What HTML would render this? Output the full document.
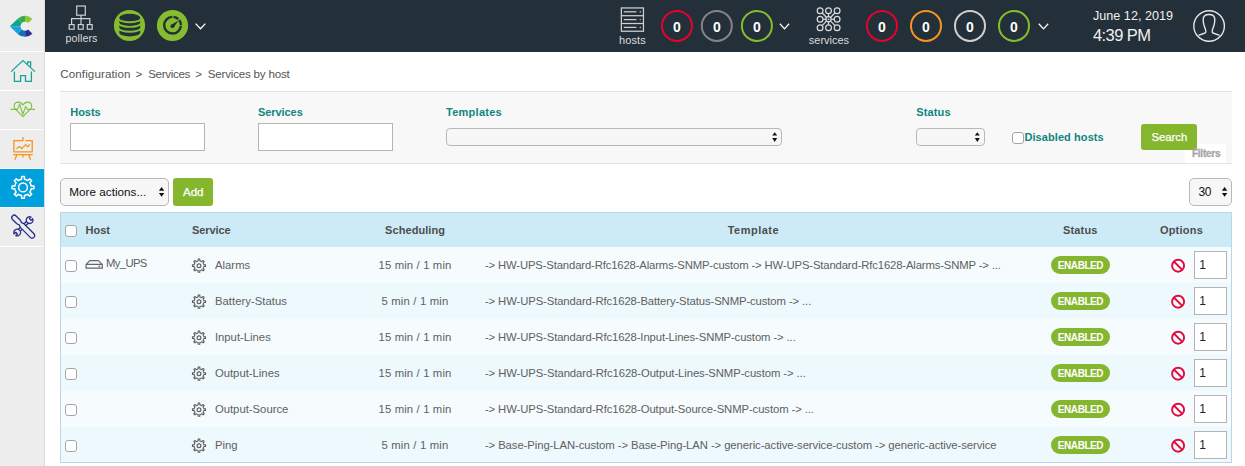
<!DOCTYPE html>
<html><head><meta charset="utf-8">
<style>
*{box-sizing:border-box;margin:0;padding:0}
html,body{width:1245px;height:466px;overflow:hidden;background:#fff;font-family:"Liberation Sans",sans-serif}
.a{position:absolute}
.t{position:absolute;white-space:nowrap;line-height:1}
.sep{position:absolute;left:0;width:44px;height:1px;background:#fff}
.inp{position:absolute;background:#fff;border:1px solid #b5b5b8}
.sel{position:absolute;background:#f7f7f7;border:1px solid #b8b8b8;border-radius:4px}
.row{position:absolute;left:61px;width:1170px;height:36px}
.cb{position:absolute;width:12px;height:12px;border:1px solid #a6a6a6;border-radius:3px;background:#fff}
.badge{position:absolute;width:59px;height:18px;border-radius:9px;background:#84b62e}
.num{position:absolute;width:33px;height:28px;background:#fff;border:1px solid #b3b3b3}
svg{position:absolute;left:0;top:0}
</style></head><body>
<div class="a" style="left:0;top:0;width:45px;height:466px;background:#ededed;border-right:1px solid #dcdcdc"></div>
<div class="sep" style="top:51px"></div>
<div class="sep" style="top:90px"></div>
<div class="sep" style="top:129px"></div>
<div class="sep" style="top:168px"></div>
<div class="sep" style="top:207px"></div>
<div class="sep" style="top:246px"></div>
<div class="a" style="left:0;top:169px;width:44px;height:38px;background:#00a0dd"></div>
<div class="a" style="left:45px;top:0;width:1200px;height:52px;background:#232f39"></div>
<div class="t" style="left:60.20px;top:68.18px;font-size:11.6px;color:#555;letter-spacing:0.115px;">Configuration</div>
<div class="t" style="left:135.60px;top:68.18px;font-size:11.6px;color:#555;">&gt;</div>
<div class="t" style="left:148.20px;top:68.18px;font-size:11.6px;color:#555;letter-spacing:-0.335px;">Services</div>
<div class="t" style="left:195.20px;top:68.18px;font-size:11.6px;color:#555;">&gt;</div>
<div class="t" style="left:207.70px;top:68.18px;font-size:11.6px;color:#555;letter-spacing:-0.194px;">Services by host</div>
<div class="a" style="left:60px;top:91px;width:1172px;height:73px;background:#f8f8f8;border-top:1px solid #e3e3e3;border-bottom:1px solid #e3e3e3"></div>
<div class="t" style="left:70.30px;top:106.79px;font-size:11px;color:#10857f;font-weight:bold;letter-spacing:-0.053px;">Hosts</div>
<div class="inp" style="left:70px;top:123px;width:135px;height:28px"></div>
<div class="t" style="left:258.00px;top:106.79px;font-size:11px;color:#10857f;font-weight:bold;letter-spacing:-0.070px;">Services</div>
<div class="inp" style="left:258px;top:123px;width:135px;height:28px"></div>
<div class="t" style="left:446.00px;top:106.79px;font-size:11px;color:#10857f;font-weight:bold;letter-spacing:0.267px;">Templates</div>
<div class="sel" style="left:446px;top:128px;width:336px;height:18px"></div>
<div class="t" style="left:916.20px;top:106.59px;font-size:11px;color:#10857f;font-weight:bold;letter-spacing:0.147px;">Status</div>
<div class="sel" style="left:916px;top:128px;width:69px;height:18px"></div>
<div class="cb" style="left:1012px;top:132px"></div>
<div class="t" style="left:1024.40px;top:131.59px;font-size:11px;color:#10857f;font-weight:bold;letter-spacing:0.083px;">Disabled hosts</div>
<div class="a" style="left:1185px;top:144px;width:41px;height:19px;background:#fff"></div>
<div class="a" style="left:1141px;top:124px;width:56px;height:26px;background:#84b62e;border-radius:3px"></div>
<div class="t" style="left:1151.50px;top:131.55px;font-size:11.4px;color:#fff;letter-spacing:-0.070px;-webkit-text-stroke:0.25px #fff;">Search</div>
<div class="t" style="left:1192.00px;top:149.13px;font-size:10px;color:#a6a6a6;font-weight:bold;letter-spacing:-0.259px;-webkit-text-stroke:0.3px #a6a6a6;">Filters</div>
<div class="sel" style="left:60px;top:178px;width:109px;height:28px;border-radius:5px"></div>
<div class="t" style="left:69.30px;top:186.10px;font-size:11.7px;color:#111;letter-spacing:0.018px;">More actions...</div>
<div class="a" style="left:173px;top:178px;width:40px;height:28px;background:#84b62e;border-radius:3px"></div>
<div class="t" style="left:183.10px;top:186.18px;font-size:11.6px;color:#fff;letter-spacing:-0.114px;-webkit-text-stroke:0.25px #fff;">Add</div>
<div class="sel" style="left:1189px;top:178px;width:43px;height:28px;border-radius:5px"></div>
<div class="t" style="left:1198.60px;top:185.84px;font-size:12px;color:#111;letter-spacing:-0.424px;">30</div>
<div class="a" style="left:60px;top:212px;width:1172px;height:251px;border:1px solid #bcd6e5;background:#f6fcfe"></div>
<div class="a" style="left:61px;top:213px;width:1170px;height:34px;background:#cdebf7"></div>
<div class="row" style="top:283px;height:36px;background:#eef9fd"></div>
<div class="row" style="top:355px;height:36px;background:#eef9fd"></div>
<div class="row" style="top:427px;height:35px;background:#eef9fd"></div>
<div class="cb" style="left:65px;top:225px"></div>
<div class="t" style="left:85.60px;top:224.59px;font-size:11px;color:#4d4d4d;font-weight:bold;letter-spacing:-0.011px;">Host</div>
<div class="t" style="left:191.90px;top:224.79px;font-size:11px;color:#4d4d4d;font-weight:bold;letter-spacing:-0.049px;">Service</div>
<div class="t" style="left:385.10px;top:224.69px;font-size:11px;color:#4d4d4d;font-weight:bold;letter-spacing:0.062px;">Scheduling</div>
<div class="t" style="left:727.70px;top:224.59px;font-size:11px;color:#4d4d4d;font-weight:bold;letter-spacing:0.490px;">Template</div>
<div class="t" style="left:1063.00px;top:224.79px;font-size:11px;color:#4d4d4d;font-weight:bold;letter-spacing:0.163px;">Status</div>
<div class="t" style="left:1159.90px;top:224.99px;font-size:11px;color:#4d4d4d;font-weight:bold;letter-spacing:0.221px;">Options</div>
<div class="cb" style="left:65px;top:260px"></div>
<div class="t" style="left:106.00px;top:258.33px;font-size:11.3px;color:#606060;letter-spacing:-0.647px;">My_UPS</div>
<div class="t" style="left:214.90px;top:259.93px;font-size:11.3px;color:#606060;letter-spacing:0.040px;">Alarms</div>
<div class="t" style="left:378.50px;top:259.93px;font-size:11.3px;color:#606060;letter-spacing:0.145px;">15 min / 1 min</div>
<div class="t" style="left:484.90px;top:259.93px;font-size:11.3px;color:#606060;letter-spacing:-0.143px;">-&gt; HW-UPS-Standard-Rfc1628-Alarms-SNMP-custom -&gt; HW-UPS-Standard-Rfc1628-Alarms-SNMP -&gt; ...</div>
<div class="badge" style="left:1051px;top:256px"></div>
<div class="t" style="left:1057.85px;top:261.44px;font-size:10px;color:#fff;font-weight:bold;letter-spacing:-0.434px;">ENABLED</div>
<div class="num" style="left:1194px;top:251px"></div>
<div class="t" style="left:1199.30px;top:258.84px;font-size:12px;color:#222;">1</div>
<div class="cb" style="left:65px;top:296px"></div>
<div class="t" style="left:214.90px;top:295.93px;font-size:11.3px;color:#606060;letter-spacing:0.036px;">Battery-Status</div>
<div class="t" style="left:381.45px;top:295.93px;font-size:11.3px;color:#606060;letter-spacing:0.186px;">5 min / 1 min</div>
<div class="t" style="left:484.90px;top:295.93px;font-size:11.3px;color:#606060;letter-spacing:-0.104px;">-&gt; HW-UPS-Standard-Rfc1628-Battery-Status-SNMP-custom -&gt; ...</div>
<div class="badge" style="left:1051px;top:292px"></div>
<div class="t" style="left:1057.85px;top:297.44px;font-size:10px;color:#fff;font-weight:bold;letter-spacing:-0.434px;">ENABLED</div>
<div class="num" style="left:1194px;top:287px"></div>
<div class="t" style="left:1199.30px;top:294.84px;font-size:12px;color:#222;">1</div>
<div class="cb" style="left:65px;top:332px"></div>
<div class="t" style="left:214.90px;top:331.93px;font-size:11.3px;color:#606060;">Input-Lines</div>
<div class="t" style="left:378.50px;top:331.93px;font-size:11.3px;color:#606060;letter-spacing:0.145px;">15 min / 1 min</div>
<div class="t" style="left:484.90px;top:331.93px;font-size:11.3px;color:#606060;letter-spacing:-0.106px;">-&gt; HW-UPS-Standard-Rfc1628-Input-Lines-SNMP-custom -&gt; ...</div>
<div class="badge" style="left:1051px;top:328px"></div>
<div class="t" style="left:1057.85px;top:333.44px;font-size:10px;color:#fff;font-weight:bold;letter-spacing:-0.434px;">ENABLED</div>
<div class="num" style="left:1194px;top:323px"></div>
<div class="t" style="left:1199.30px;top:330.84px;font-size:12px;color:#222;">1</div>
<div class="cb" style="left:65px;top:368px"></div>
<div class="t" style="left:214.90px;top:367.93px;font-size:11.3px;color:#606060;">Output-Lines</div>
<div class="t" style="left:378.50px;top:367.93px;font-size:11.3px;color:#606060;letter-spacing:0.145px;">15 min / 1 min</div>
<div class="t" style="left:484.90px;top:367.93px;font-size:11.3px;color:#606060;letter-spacing:-0.083px;">-&gt; HW-UPS-Standard-Rfc1628-Output-Lines-SNMP-custom -&gt; ...</div>
<div class="badge" style="left:1051px;top:364px"></div>
<div class="t" style="left:1057.85px;top:369.44px;font-size:10px;color:#fff;font-weight:bold;letter-spacing:-0.434px;">ENABLED</div>
<div class="num" style="left:1194px;top:359px"></div>
<div class="t" style="left:1199.30px;top:366.84px;font-size:12px;color:#222;">1</div>
<div class="cb" style="left:65px;top:404px"></div>
<div class="t" style="left:214.90px;top:403.93px;font-size:11.3px;color:#606060;">Output-Source</div>
<div class="t" style="left:378.50px;top:403.93px;font-size:11.3px;color:#606060;letter-spacing:0.145px;">15 min / 1 min</div>
<div class="t" style="left:484.90px;top:403.93px;font-size:11.3px;color:#606060;letter-spacing:-0.092px;">-&gt; HW-UPS-Standard-Rfc1628-Output-Source-SNMP-custom -&gt; ...</div>
<div class="badge" style="left:1051px;top:400px"></div>
<div class="t" style="left:1057.85px;top:405.44px;font-size:10px;color:#fff;font-weight:bold;letter-spacing:-0.434px;">ENABLED</div>
<div class="num" style="left:1194px;top:395px"></div>
<div class="t" style="left:1199.30px;top:402.84px;font-size:12px;color:#222;">1</div>
<div class="cb" style="left:65px;top:440px"></div>
<div class="t" style="left:214.90px;top:439.93px;font-size:11.3px;color:#606060;">Ping</div>
<div class="t" style="left:381.45px;top:439.93px;font-size:11.3px;color:#606060;letter-spacing:0.186px;">5 min / 1 min</div>
<div class="t" style="left:484.90px;top:439.93px;font-size:11.3px;color:#606060;letter-spacing:-0.077px;">-&gt; Base-Ping-LAN-custom -&gt; Base-Ping-LAN -&gt; generic-active-service-custom -&gt; generic-active-service</div>
<div class="badge" style="left:1051px;top:436px"></div>
<div class="t" style="left:1057.85px;top:441.44px;font-size:10px;color:#fff;font-weight:bold;letter-spacing:-0.434px;">ENABLED</div>
<div class="num" style="left:1194px;top:431px"></div>
<div class="t" style="left:1199.30px;top:438.84px;font-size:12px;color:#222;">1</div>
<svg width="1245" height="466" viewBox="0 0 1245 466" style="position:absolute;left:0;top:0"><defs><clipPath id="lc"><path d="M32.42,18.88 A10.5,10.5 0 0 0 17.74,18.71 L9.8,26.3 L17.74,33.89 A10.5,10.5 0 0 0 32.42,33.72 L28.18,29.48 A4.5,4.5 0 1 1 28.18,23.12 Z"/></clipPath></defs><g clip-path="url(#lc)"><polygon fill="#8cc63f" points="25.0,26.3 45,26.3 45,0 25.0,0"/><polygon fill="#3aaa48" points="25.0,26.3 25.0,0 4.27,4.61"/><polygon fill="#12a38c" points="25.0,26.3 4.27,4.61 0,4.61 0,26.3"/><polygon fill="#18a3dd" points="25.0,26.3 0,26.3 0,48 4.27,47.99"/><polygon fill="#1272b8" points="25.0,26.3 4.27,47.99 25.6,56"/><polygon fill="#2e3192" points="25.0,26.3 25.6,56 45,56 45,26.3"/></g><g fill="none" stroke="#17a498" stroke-width="1.3" stroke-linecap="square"><polyline points="11.6,71.2 22.9,60.6 34.5,71.2"/><polyline points="27.6,63.6 27.6,61.9 30.6,61.9 30.6,66.3"/><polyline points="14.4,72.2 14.4,81.4 20.6,81.4 20.6,75.6 25.5,75.6 25.5,81.4 31.4,81.4 31.4,72.2"/></g><g fill="none" stroke="#80c244" stroke-width="1.15" stroke-linejoin="round"><path d="M22.9,116.6 L15.4,109.2 C12.8,106.2 14.2,102.2 18,102.1 C20.3,102.1 22,103.6 22.9,105 C23.8,103.6 25.5,102.1 27.8,102.1 C31.6,102.2 33,106.2 30.4,109.2 Z"/><polyline points="10.6,109.4 17.5,109.4 19.6,104.3 22.9,114.2 25.7,106.4 27.3,109.4 35,109.4"/></g><g fill="none" stroke="#f7941d" stroke-width="1.3"><path d="M22.9,137 V140.6 H13.9 V151.9 H32.2 V140.6 H25.3"/><line x1="13.3" y1="154.7" x2="32.8" y2="154.7"/><line x1="16.8" y1="155" x2="15" y2="159.8"/><line x1="22.9" y1="155" x2="22.9" y2="157.6"/><line x1="28.8" y1="155" x2="30.6" y2="159.8"/><polyline stroke-linejoin="round" points="16.5,148.8 19.5,146.6 21.8,148.6 25.7,144.6 27.8,146.8 29.8,144.4"/></g><path fill="none" stroke="#fff" stroke-width="1.5" stroke-linejoin="round" d="M19.82,179.73 L21.54,179.23 L21.62,176.49 L24.38,176.49 L24.46,179.23 L26.18,179.73 L27.75,180.59 L29.74,178.71 L31.69,180.66 L29.81,182.65 L30.67,184.22 L31.17,185.94 L33.91,186.02 L33.91,188.78 L31.17,188.86 L30.67,190.58 L29.81,192.15 L31.69,194.14 L29.74,196.09 L27.75,194.21 L26.18,195.07 L24.46,195.57 L24.38,198.31 L21.62,198.31 L21.54,195.57 L19.82,195.07 L18.25,194.21 L16.26,196.09 L14.31,194.14 L16.19,192.15 L15.33,190.58 L14.83,188.86 L12.09,188.78 L12.09,186.02 L14.83,185.94 L15.33,184.22 L16.19,182.65 L14.31,180.66 L16.26,178.71 L18.25,180.59 Z"/><circle cx="23" cy="187.4" r="4.4" fill="none" stroke="#fff" stroke-width="1.5"/><g fill="#ededed" stroke="#262e8a" stroke-width="1.3" stroke-linejoin="round"><g transform="translate(23.4,226.3) rotate(-45)"><path d="M-6.5,-1.3 L6.5,-1.3 L6.5,1.3 L-6.5,1.3 Z"/><path d="M11.98,-1.2 A3.4,3.4 0 1 0 11.98,1.2 L9.6,1.2 L9.6,-1.2 Z"/><path d="M-11.98,-1.2 A3.4,3.4 0 1 1 -11.98,1.2 L-9.6,1.2 L-9.6,-1.2 Z"/></g><g transform="translate(23.2,226.6) rotate(45)"><path d="M-12.6,-2.5 A2.5,2.5 0 0 0 -12.6,2.5 L-6.5,2.5 L-4,1.6 L-1.5,2.6 L12.6,2.6 A2.6,2.6 0 0 0 12.6,-2.6 L-1.5,-2.6 L-4,-1.6 L-6.5,-2.5 Z"/></g></g><g fill="none" stroke="#cfcfcf" stroke-width="1.2"><rect x="76.7" y="6" width="8.6" height="9.2"/><line x1="81" y1="15.2" x2="81" y2="24.5"/><polyline points="71.6,24.5 71.6,18.6 89.8,18.6 89.8,24.5"/><rect x="69.2" y="24.6" width="4.9" height="4.6"/><rect x="78.3" y="24.6" width="4.9" height="4.6"/><rect x="87.3" y="24.6" width="4.9" height="4.6"/></g><circle cx="129.5" cy="25.5" r="15.6" fill="#86bc2f"/><path fill="#232f39" d="M119.3,17.65 A10.45,3.85 0 0 1 140.2,17.65 L140.2,32.65 A10.45,3.85 0 0 1 119.3,32.65 Z"/><path fill="none" stroke="#86bc2f" stroke-width="1.9" d="M118.6,18.4 A11.1,3.85 0 0 0 140.9,18.4"/><path fill="none" stroke="#86bc2f" stroke-width="1.9" d="M118.6,23.0 A11.1,3.85 0 0 0 140.9,23.0"/><path fill="none" stroke="#86bc2f" stroke-width="1.9" d="M118.6,27.9 A11.1,3.85 0 0 0 140.9,27.9"/><circle cx="172.5" cy="25.5" r="15.6" fill="#86bc2f"/><circle cx="172.55" cy="25.2" r="8.35" fill="none" stroke="#232f39" stroke-width="2.4" stroke-dasharray="38.3 1.2 5.35 1.2 5.35 1.2" stroke-dashoffset="-0.6"/><polygon fill="#232f39" points="171.0,24.9 173.7,27.5 178.4,20.6"/><circle cx="172.35" cy="26.2" r="1.85" fill="#232f39"/><g fill="none" stroke="#fff" stroke-width="1.3"><polyline points="195.6,23.6 200.5,28.7 205.4,23.6"/><polyline points="779.9,23.8 784.5,28.9 789.1,23.8"/><polyline points="1038.8,23.8 1043.5,28.9 1048.2,23.8"/></g><g fill="none" stroke="#cfcfcf" stroke-width="1.25"><rect x="621.35" y="7.95" width="22.1" height="23.3"/><line x1="621.35" y1="15.7" x2="643.45" y2="15.7"/><line x1="621.35" y1="23.5" x2="643.45" y2="23.5"/><line x1="623.8" y1="11.8" x2="636.4" y2="11.8"/><line x1="623.8" y1="19.6" x2="636.4" y2="19.6"/><line x1="623.8" y1="27.4" x2="636.4" y2="27.4"/></g><g fill="#cfcfcf"><circle cx="640.3" cy="11.8" r="0.7"/><circle cx="640.3" cy="19.6" r="0.7"/><circle cx="640.3" cy="27.4" r="0.7"/></g><g fill="none" stroke="#dcdcdc" stroke-width="1.2"><circle cx="820.1" cy="10.7" r="2.9"/><line x1="826.68" y1="17.73" x2="822.13" y2="12.77"/><circle cx="820.1" cy="19.3" r="2.9"/><line x1="825.90" y1="19.30" x2="823.00" y2="19.30"/><circle cx="820.1" cy="27.7" r="2.9"/><line x1="826.66" y1="20.86" x2="822.15" y2="25.65"/><circle cx="828.5" cy="10.7" r="2.9"/><line x1="828.50" y1="17.10" x2="828.50" y2="13.60"/><circle cx="828.5" cy="27.7" r="2.9"/><line x1="828.50" y1="21.50" x2="828.50" y2="24.80"/><circle cx="837.1" cy="10.7" r="2.9"/><line x1="830.34" y1="17.74" x2="835.05" y2="12.75"/><circle cx="837.1" cy="19.3" r="2.9"/><line x1="831.10" y1="19.30" x2="834.20" y2="19.30"/><circle cx="837.1" cy="27.7" r="2.9"/><line x1="830.36" y1="20.84" x2="835.03" y2="25.67"/><circle cx="828.5" cy="19.3" r="2.6"/></g><circle cx="828.5" cy="19.3" r="0.9" fill="#dcdcdc"/><circle cx="677" cy="25.9" r="15" fill="none" stroke="#e4032e" stroke-width="2"/><circle cx="716.8" cy="25.9" r="15" fill="none" stroke="#848487" stroke-width="2"/><circle cx="756.9" cy="25.9" r="15" fill="none" stroke="#84bd2d" stroke-width="2"/><circle cx="882" cy="25.9" r="15" fill="none" stroke="#e4032e" stroke-width="2"/><circle cx="926" cy="25.9" r="15" fill="none" stroke="#f7931e" stroke-width="2"/><circle cx="970" cy="25.9" r="15" fill="none" stroke="#cfcfcf" stroke-width="2"/><circle cx="1014" cy="25.9" r="15" fill="none" stroke="#84bd2d" stroke-width="2"/><g fill="none" stroke="#e6e6e6" stroke-width="1.4"><circle cx="1209.1" cy="26" r="15.3"/><path d="M1198.4,35.4 L1205,33 Q1206.2,32.4 1205.8,30.6 L1203.8,24.5 Q1203.2,22 1203.2,19.5 Q1203.2,14.5 1209,14.5 Q1214.8,14.5 1214.8,19.5 Q1214.8,22 1214.2,24.5 L1212.2,30.6 Q1211.8,32.4 1213,33 L1219.6,35.4"/></g><path fill="none" stroke="#606060" stroke-width="1.1" stroke-linejoin="round" d="M197.12,261.17 L198.14,260.88 L198.17,259.15 L199.83,259.15 L199.86,260.88 L200.88,261.17 L201.80,261.68 L203.05,260.48 L204.22,261.65 L203.02,262.90 L203.53,263.82 L203.82,264.84 L205.55,264.87 L205.55,266.53 L203.82,266.56 L203.53,267.58 L203.02,268.50 L204.22,269.75 L203.05,270.92 L201.80,269.72 L200.88,270.23 L199.86,270.52 L199.83,272.25 L198.17,272.25 L198.14,270.52 L197.12,270.23 L196.20,269.72 L194.95,270.92 L193.78,269.75 L194.98,268.50 L194.47,267.58 L194.18,266.56 L192.45,266.53 L192.45,264.87 L194.18,264.84 L194.47,263.82 L194.98,262.90 L193.78,261.65 L194.95,260.48 L196.20,261.68 Z"/><circle cx="199" cy="265.7" r="1.9" fill="none" stroke="#606060" stroke-width="1.2"/><circle cx="1178.1" cy="265.7" r="6" fill="none" stroke="#e00b3d" stroke-width="1.9"/><line x1="1173.8999999999999" y1="261.5" x2="1182.3" y2="269.9" stroke="#e00b3d" stroke-width="1.9"/><path fill="none" stroke="#606060" stroke-width="1.1" stroke-linejoin="round" d="M197.12,297.17 L198.14,296.88 L198.17,295.15 L199.83,295.15 L199.86,296.88 L200.88,297.17 L201.80,297.68 L203.05,296.48 L204.22,297.65 L203.02,298.90 L203.53,299.82 L203.82,300.84 L205.55,300.87 L205.55,302.53 L203.82,302.56 L203.53,303.58 L203.02,304.50 L204.22,305.75 L203.05,306.92 L201.80,305.72 L200.88,306.23 L199.86,306.52 L199.83,308.25 L198.17,308.25 L198.14,306.52 L197.12,306.23 L196.20,305.72 L194.95,306.92 L193.78,305.75 L194.98,304.50 L194.47,303.58 L194.18,302.56 L192.45,302.53 L192.45,300.87 L194.18,300.84 L194.47,299.82 L194.98,298.90 L193.78,297.65 L194.95,296.48 L196.20,297.68 Z"/><circle cx="199" cy="301.7" r="1.9" fill="none" stroke="#606060" stroke-width="1.2"/><circle cx="1178.1" cy="301.7" r="6" fill="none" stroke="#e00b3d" stroke-width="1.9"/><line x1="1173.8999999999999" y1="297.5" x2="1182.3" y2="305.9" stroke="#e00b3d" stroke-width="1.9"/><path fill="none" stroke="#606060" stroke-width="1.1" stroke-linejoin="round" d="M197.12,333.17 L198.14,332.88 L198.17,331.15 L199.83,331.15 L199.86,332.88 L200.88,333.17 L201.80,333.68 L203.05,332.48 L204.22,333.65 L203.02,334.90 L203.53,335.82 L203.82,336.84 L205.55,336.87 L205.55,338.53 L203.82,338.56 L203.53,339.58 L203.02,340.50 L204.22,341.75 L203.05,342.92 L201.80,341.72 L200.88,342.23 L199.86,342.52 L199.83,344.25 L198.17,344.25 L198.14,342.52 L197.12,342.23 L196.20,341.72 L194.95,342.92 L193.78,341.75 L194.98,340.50 L194.47,339.58 L194.18,338.56 L192.45,338.53 L192.45,336.87 L194.18,336.84 L194.47,335.82 L194.98,334.90 L193.78,333.65 L194.95,332.48 L196.20,333.68 Z"/><circle cx="199" cy="337.7" r="1.9" fill="none" stroke="#606060" stroke-width="1.2"/><circle cx="1178.1" cy="337.7" r="6" fill="none" stroke="#e00b3d" stroke-width="1.9"/><line x1="1173.8999999999999" y1="333.5" x2="1182.3" y2="341.9" stroke="#e00b3d" stroke-width="1.9"/><path fill="none" stroke="#606060" stroke-width="1.1" stroke-linejoin="round" d="M197.12,369.17 L198.14,368.88 L198.17,367.15 L199.83,367.15 L199.86,368.88 L200.88,369.17 L201.80,369.68 L203.05,368.48 L204.22,369.65 L203.02,370.90 L203.53,371.82 L203.82,372.84 L205.55,372.87 L205.55,374.53 L203.82,374.56 L203.53,375.58 L203.02,376.50 L204.22,377.75 L203.05,378.92 L201.80,377.72 L200.88,378.23 L199.86,378.52 L199.83,380.25 L198.17,380.25 L198.14,378.52 L197.12,378.23 L196.20,377.72 L194.95,378.92 L193.78,377.75 L194.98,376.50 L194.47,375.58 L194.18,374.56 L192.45,374.53 L192.45,372.87 L194.18,372.84 L194.47,371.82 L194.98,370.90 L193.78,369.65 L194.95,368.48 L196.20,369.68 Z"/><circle cx="199" cy="373.7" r="1.9" fill="none" stroke="#606060" stroke-width="1.2"/><circle cx="1178.1" cy="373.7" r="6" fill="none" stroke="#e00b3d" stroke-width="1.9"/><line x1="1173.8999999999999" y1="369.5" x2="1182.3" y2="377.9" stroke="#e00b3d" stroke-width="1.9"/><path fill="none" stroke="#606060" stroke-width="1.1" stroke-linejoin="round" d="M197.12,405.17 L198.14,404.88 L198.17,403.15 L199.83,403.15 L199.86,404.88 L200.88,405.17 L201.80,405.68 L203.05,404.48 L204.22,405.65 L203.02,406.90 L203.53,407.82 L203.82,408.84 L205.55,408.87 L205.55,410.53 L203.82,410.56 L203.53,411.58 L203.02,412.50 L204.22,413.75 L203.05,414.92 L201.80,413.72 L200.88,414.23 L199.86,414.52 L199.83,416.25 L198.17,416.25 L198.14,414.52 L197.12,414.23 L196.20,413.72 L194.95,414.92 L193.78,413.75 L194.98,412.50 L194.47,411.58 L194.18,410.56 L192.45,410.53 L192.45,408.87 L194.18,408.84 L194.47,407.82 L194.98,406.90 L193.78,405.65 L194.95,404.48 L196.20,405.68 Z"/><circle cx="199" cy="409.7" r="1.9" fill="none" stroke="#606060" stroke-width="1.2"/><circle cx="1178.1" cy="409.7" r="6" fill="none" stroke="#e00b3d" stroke-width="1.9"/><line x1="1173.8999999999999" y1="405.5" x2="1182.3" y2="413.9" stroke="#e00b3d" stroke-width="1.9"/><path fill="none" stroke="#606060" stroke-width="1.1" stroke-linejoin="round" d="M197.12,441.17 L198.14,440.88 L198.17,439.15 L199.83,439.15 L199.86,440.88 L200.88,441.17 L201.80,441.68 L203.05,440.48 L204.22,441.65 L203.02,442.90 L203.53,443.82 L203.82,444.84 L205.55,444.87 L205.55,446.53 L203.82,446.56 L203.53,447.58 L203.02,448.50 L204.22,449.75 L203.05,450.92 L201.80,449.72 L200.88,450.23 L199.86,450.52 L199.83,452.25 L198.17,452.25 L198.14,450.52 L197.12,450.23 L196.20,449.72 L194.95,450.92 L193.78,449.75 L194.98,448.50 L194.47,447.58 L194.18,446.56 L192.45,446.53 L192.45,444.87 L194.18,444.84 L194.47,443.82 L194.98,442.90 L193.78,441.65 L194.95,440.48 L196.20,441.68 Z"/><circle cx="199" cy="445.7" r="1.9" fill="none" stroke="#606060" stroke-width="1.2"/><circle cx="1178.1" cy="445.7" r="6" fill="none" stroke="#e00b3d" stroke-width="1.9"/><line x1="1173.8999999999999" y1="441.5" x2="1182.3" y2="449.9" stroke="#e00b3d" stroke-width="1.9"/><path fill="none" stroke="#666" stroke-width="1.2" stroke-linejoin="round" d="M86.1,264.4 L89.9,260.6 L98.3,260.6 L102.3,264.4 L102.3,268.2 L86.1,268.2 Z M86.1,264.4 L102.3,264.4"/><circle cx="99.3" cy="266.4" r="0.8" fill="#666"/><polygon fill="#111" points="772.2,135.6 777.2,135.6 774.7,132.2"/><polygon fill="#111" points="772.2,138 777.2,138 774.7,141.9"/><polygon fill="#111" points="974.8,135.6 979.8,135.6 977.3,132.2"/><polygon fill="#111" points="974.8,138 979.8,138 977.3,141.9"/><polygon fill="#111" points="158.9,190.7 164.3,190.7 161.60000000000002,186.9"/><polygon fill="#111" points="158.9,193.0 164.3,193.0 161.60000000000002,196.8"/><polygon fill="#111" points="1221.9,190.7 1227.3,190.7 1224.6,186.9"/><polygon fill="#111" points="1221.9,193.0 1227.3,193.0 1224.6,196.8"/></svg>
<div class="t" style="left:65.40px;top:33.24px;font-size:10.7px;color:#dcdcdc;letter-spacing:0.097px;">pollers</div>
<div class="t" style="left:619.10px;top:34.69px;font-size:11px;color:#dcdcdc;letter-spacing:0.062px;">hosts</div>
<div class="t" style="left:808.80px;top:35.19px;font-size:11px;color:#dcdcdc;letter-spacing:-0.018px;">services</div>
<div class="t" style="left:673.11px;top:20.25px;font-size:14px;color:#fff;font-weight:bold;">0</div>
<div class="t" style="left:712.91px;top:20.25px;font-size:14px;color:#fff;font-weight:bold;">0</div>
<div class="t" style="left:753.01px;top:20.25px;font-size:14px;color:#fff;font-weight:bold;">0</div>
<div class="t" style="left:878.11px;top:20.25px;font-size:14px;color:#fff;font-weight:bold;">0</div>
<div class="t" style="left:922.11px;top:20.25px;font-size:14px;color:#fff;font-weight:bold;">0</div>
<div class="t" style="left:966.11px;top:20.25px;font-size:14px;color:#fff;font-weight:bold;">0</div>
<div class="t" style="left:1010.11px;top:20.25px;font-size:14px;color:#fff;font-weight:bold;">0</div>
<div class="t" style="left:1092.90px;top:10.43px;font-size:12.6px;color:#f0f0f0;letter-spacing:0.033px;">June 12, 2019</div>
<div class="t" style="left:1092.90px;top:26.83px;font-size:16.5px;color:#f0f0f0;letter-spacing:-0.564px;">4:39 PM</div>
</body></html>
